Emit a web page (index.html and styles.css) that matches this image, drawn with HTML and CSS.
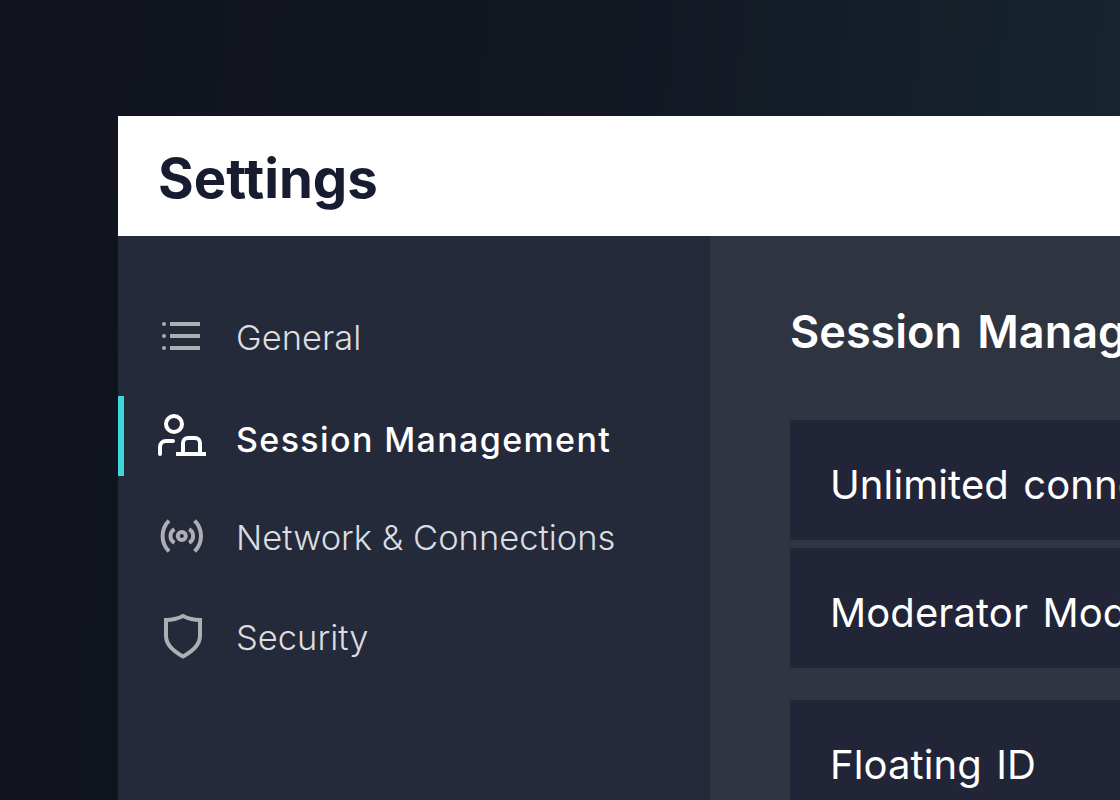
FILE: index.html
```html
<!DOCTYPE html>
<html lang="en">
<head>
<meta charset="utf-8">
<title>Settings</title>
<link rel="stylesheet" href="styles.css">
</head>
<body>
<div class="window">
  <header class="titlebar"><h1 class="title">Settings</h1></header>
  <div class="panes">
    <nav class="sidebar">
      <a class="nav-item">
        <svg class="icon" viewBox="0 0 48 48" fill="none" stroke="currentColor" stroke-width="4"><circle cx="6" cy="12" r="2" fill="currentColor" stroke="none"/><circle cx="6" cy="24" r="2" fill="currentColor" stroke="none"/><circle cx="6" cy="36" r="2" fill="currentColor" stroke="none"/><path d="M12 12h30M12 24h30M12 36h30"/></svg>
        <span class="nav-label">General</span>
      </a>
      <a class="nav-item active">
        <svg class="icon" viewBox="0 0 48 48" fill="none" stroke="currentColor" stroke-width="4"><circle cx="16" cy="12" r="8"/><path stroke-linecap="round" d="M2 42V35a6 6 0 0 1 6-6h7"/><path d="M25 42V31a5 5 0 0 1 5-5h7a5 5 0 0 1 5 5V42"/><path d="M18 42h30"/></svg>
        <span class="nav-label">Session Management</span>
      </a>
      <a class="nav-item">
        <svg class="icon" viewBox="0 0 48 48" fill="none" stroke="currentColor" stroke-width="4"><circle cx="23.8" cy="24" r="4"/><path d="M16.5 17.3A7.6 7.6 0 0 0 16.5 30.7M31.1 17.3A7.6 7.6 0 0 1 31.1 30.7"/><path d="M11 8.7A21.5 21.5 0 0 0 11 39.3M36.6 8.7A21.5 21.5 0 0 1 36.6 39.3"/></svg>
        <span class="nav-label">Network &amp; Connections</span>
      </a>
      <a class="nav-item">
        <svg class="icon" viewBox="0 0 48 48" fill="none" stroke="currentColor" stroke-width="4"><path d="M25 4C30 6.5 36 8 42 8V24C42 33 35 39 25 44.5 15 39 8 33 8 24V8C14 8 20 6.5 25 4z"/></svg>
        <span class="nav-label">Security</span>
      </a>
    </nav>
    <main class="content">
      <h2 class="section-title">Session Management</h2>
      <div class="row-group">
        <div class="row">Unlimited connections</div>
        <div class="row">Moderator Mode</div>
      </div>
      <div class="row-group">
        <div class="row">Floating ID</div>
      </div>
    </main>
  </div>
</div>
</body>
</html>
```
FILE: styles.css
```css
* { box-sizing: border-box; }
html, body { margin: 0; height: 100%; }
body {
  width: 1120px;
  height: 800px;
  overflow: hidden;
  padding: 116px 0 0 118px;
  background: linear-gradient(95deg, #10131e 0%, #121722 50%, #17262f 100%);
  font-family: "Inter", "Noto Sans", sans-serif;
  font-variant-ligatures: none;
}
.window { width: 1002px; height: 684px; display: flex; flex-direction: column; }
.titlebar { height: 120px; background: #fff; display: flex; align-items: center; padding: 4px 0 0 40px; flex: none; }
.title { margin: 0; font-size: 54.5px; font-weight: 700; color: #181c30; line-height: 1; }
.panes { flex: 1; display: flex; min-height: 0; }
.sidebar { width: 592px; flex: none; background: #252a3a; padding-top: 60px; display: flex; flex-direction: column; gap: 20px; }
.nav-item { height: 80px; display: flex; align-items: center; padding-left: 40px; gap: 30px; color: #aeafb2; position: relative; }
.nav-item.active { color: #fff; }
.nav-item.active::before { content: ""; position: absolute; left: 0; top: 0; bottom: 0; width: 6px; background: #3fd8d8; }
.icon { width: 48px; height: 48px; flex: none; }
.nav-label { font-size: 34.5px; font-weight: 300; color: #dcdde0; padding-top: 2px; }
.active .nav-label { font-size: 34px; letter-spacing: 1.37px; font-weight: 500; color: #fff; padding-top: 6px; }
.content { flex: 1; background: #2f3441; padding: 60px 0 0 80px; overflow: hidden; }
.section-title { margin: 0 0 52px; font-size: 45px; word-spacing: 4px; font-weight: 600; color: #fff; line-height: 72px; white-space: nowrap; }
.row-group { display: flex; flex-direction: column; gap: 8px; margin: 0 0 32px; }
.row { height: 120px; background: #222538; color: #fff; font-size: 40px; font-weight: 400; letter-spacing: 0.1px; word-spacing: 3px; display: flex; align-items: center; padding: 8px 0 0 40px; white-space: nowrap; }
```
